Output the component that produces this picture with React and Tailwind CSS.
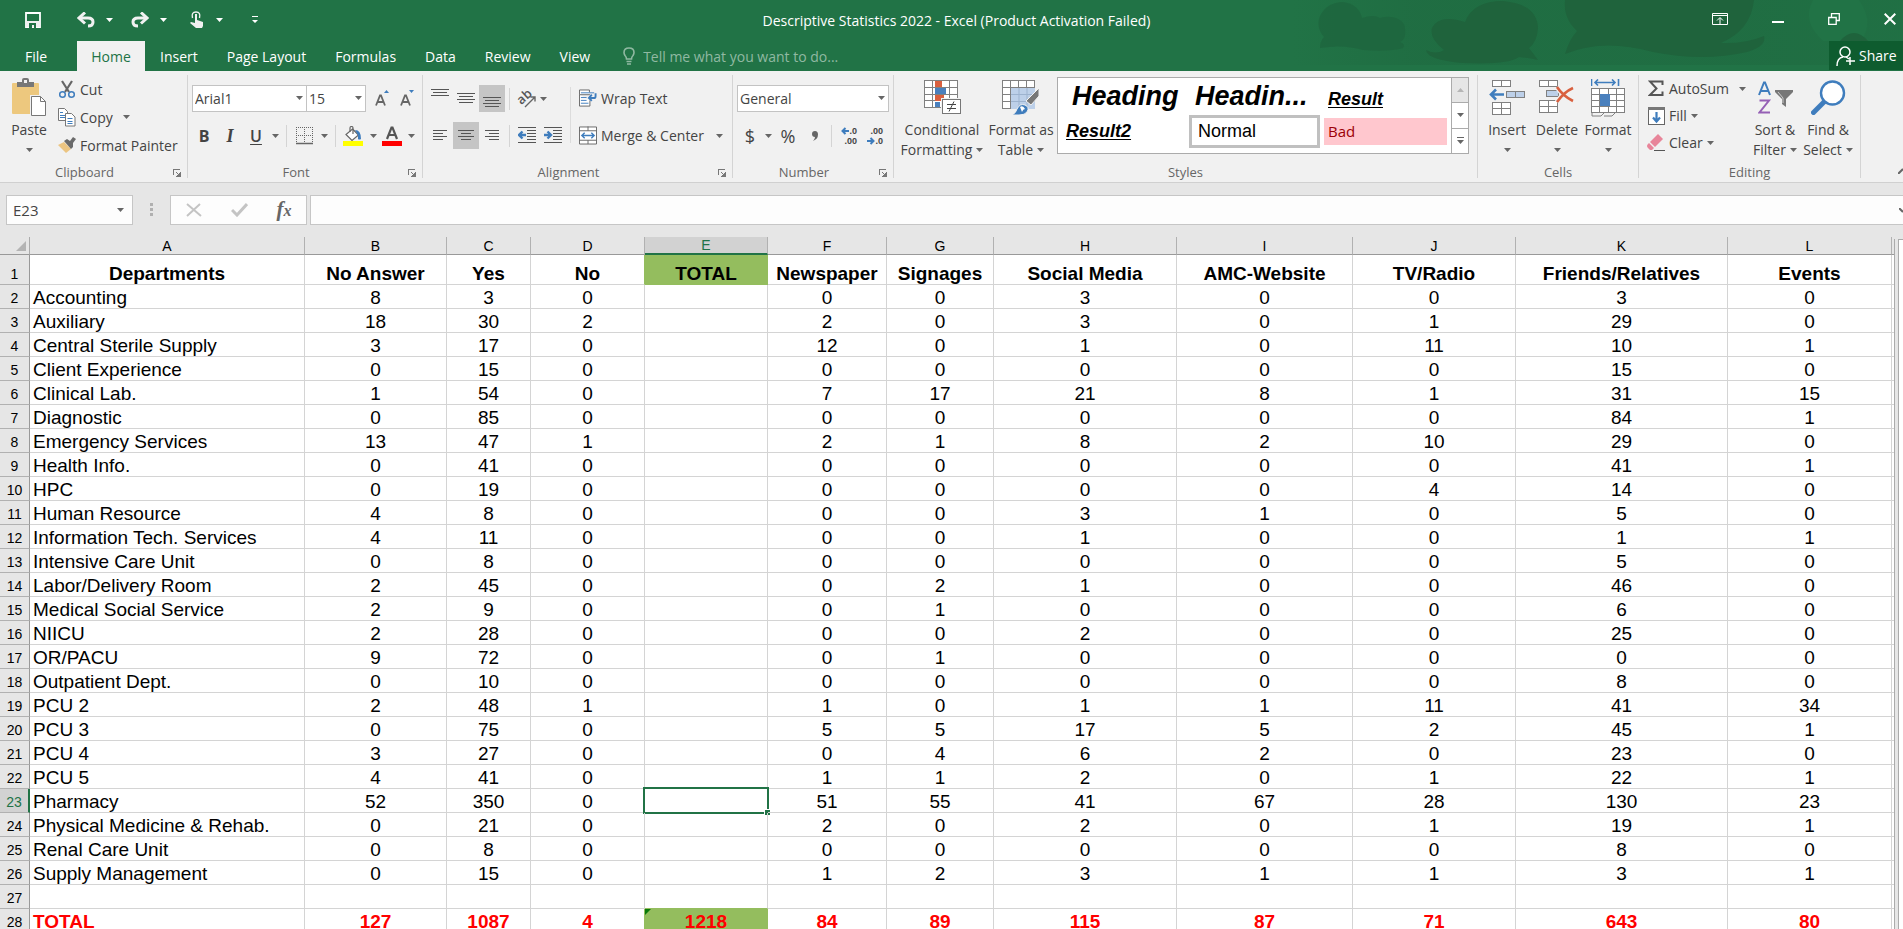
import React, { useState } from "react";

const columns = [
  { letter: "A", width: 275, title: "Departments" },
  { letter: "B", width: 142, title: "No Answer" },
  { letter: "C", width: 84, title: "Yes" },
  { letter: "D", width: 114, title: "No" },
  { letter: "E", width: 123, title: "TOTAL" },
  { letter: "F", width: 119, title: "Newspaper" },
  { letter: "G", width: 107, title: "Signages" },
  { letter: "H", width: 183, title: "Social Media" },
  { letter: "I", width: 176, title: "AMC-Website" },
  { letter: "J", width: 163, title: "TV/Radio" },
  { letter: "K", width: 212, title: "Friends/Relatives" },
  { letter: "L", width: 164, title: "Events" },
];

const rows = [
  ["Accounting", 8, 3, 0, "", 0, 0, 3, 0, 0, 3, 0],
  ["Auxiliary", 18, 30, 2, "", 2, 0, 3, 0, 1, 29, 0],
  ["Central Sterile Supply", 3, 17, 0, "", 12, 0, 1, 0, 11, 10, 1],
  ["Client Experience", 0, 15, 0, "", 0, 0, 0, 0, 0, 15, 0],
  ["Clinical Lab.", 1, 54, 0, "", 7, 17, 21, 8, 1, 31, 15],
  ["Diagnostic", 0, 85, 0, "", 0, 0, 0, 0, 0, 84, 1],
  ["Emergency Services", 13, 47, 1, "", 2, 1, 8, 2, 10, 29, 0],
  ["Health Info.", 0, 41, 0, "", 0, 0, 0, 0, 0, 41, 1],
  ["HPC", 0, 19, 0, "", 0, 0, 0, 0, 4, 14, 0],
  ["Human Resource", 4, 8, 0, "", 0, 0, 3, 1, 0, 5, 0],
  ["Information Tech. Services", 4, 11, 0, "", 0, 0, 1, 0, 0, 1, 1],
  ["Intensive Care Unit", 0, 8, 0, "", 0, 0, 0, 0, 0, 5, 0],
  ["Labor/Delivery Room", 2, 45, 0, "", 0, 2, 1, 0, 0, 46, 0],
  ["Medical Social Service", 2, 9, 0, "", 0, 1, 0, 0, 0, 6, 0],
  ["NIICU", 2, 28, 0, "", 0, 0, 2, 0, 0, 25, 0],
  ["OR/PACU", 9, 72, 0, "", 0, 1, 0, 0, 0, 0, 0],
  ["Outpatient Dept.", 0, 10, 0, "", 0, 0, 0, 0, 0, 8, 0],
  ["PCU 2", 2, 48, 1, "", 1, 0, 1, 1, 11, 41, 34],
  ["PCU 3", 0, 75, 0, "", 5, 5, 17, 5, 2, 45, 1],
  ["PCU 4", 3, 27, 0, "", 0, 4, 6, 2, 0, 23, 0],
  ["PCU 5", 4, 41, 0, "", 1, 1, 2, 0, 1, 22, 1],
  ["Pharmacy", 52, 350, 0, "", 51, 55, 41, 67, 28, 130, 23],
  ["Physical Medicine & Rehab.", 0, 21, 0, "", 2, 0, 2, 0, 1, 19, 1],
  ["Renal Care Unit", 0, 8, 0, "", 0, 0, 0, 0, 0, 8, 0],
  ["Supply Management", 0, 15, 0, "", 1, 2, 3, 1, 1, 3, 1],
  ["", "", "", "", "", "", "", "", "", "", "", ""],
  ["TOTAL", 127, 1087, 4, 1218, 84, 89, 115, 87, 71, 643, 80],
];

const tabs = ["Insert", "Page Layout", "Formulas", "Data", "Review", "View"];

const Caret = ({ className = "text-[#666]" }) => (
  <svg width="7" height="4" viewBox="0 0 7 4" className={`shrink-0 ${className}`}>
    <path d="M0 0h7L3.5 4z" fill="currentColor" />
  </svg>
);

const Lines = ({ rows, width = 18, height = 20 }) => (
  <svg width={width} height={height} shapeRendering="crispEdges">
    {rows.map(([x, y, w]) => (
      <rect key={y} x={x} y={y} width={w} height="1" fill="#555" />
    ))}
  </svg>
);

const Separator = () => <span className="mx-1 h-[22px] w-px bg-[#d4d4d4]" />;

const IconButton = ({ label, width = "w-[26px]", active, children }) => (
  <button
    type="button"
    aria-label={label}
    className={`flex h-[27px] shrink-0 items-center justify-center ${width} ${
      active ? "bg-[#c5c5c5]" : ""
    }`}
  >
    {children}
  </button>
);

const CaretButton = ({ label, width = "w-[14px]" }) => (
  <IconButton label={label} width={width}>
    <Caret />
  </IconButton>
);

const Group = ({ title, width, launcher, children }) => (
  <section
    aria-label={title}
    className={`my-1 flex h-[103px] flex-col border-r border-[#d4d4d4] ${width}`}
  >
    <div className="flex h-[91px]">{children}</div>
    <div
      className={`relative h-3 text-center text-[13px] leading-3 text-[#666] ${
        launcher ? "pr-[18px]" : ""
      }`}
    >
      {title}
      {launcher && (
        <button
          type="button"
          aria-label={`${title} settings`}
          className="absolute right-1.5 top-[3px]"
        >
          <svg width="8" height="8" shapeRendering="crispEdges">
            <path d="M.5 6V.5H7" fill="none" stroke="#777" />
            <path d="M7.500 3v5H3z" fill="#777" />
            <path d="M3 3l4 4" stroke="#777" />
          </svg>
        </button>
      )}
    </div>
  </section>
);

const BigButton = ({ icon, line1, line2, width }) => (
  <button
    type="button"
    className={`flex shrink-0 flex-col items-center whitespace-nowrap leading-5 ${width}`}
  >
    <span className="flex h-[45px] items-center justify-center">{icon}</span>
    <span>{line1}</span>
    <span className="flex h-5 items-center gap-1">
      {line2}
      <Caret />
    </span>
  </button>
);

const SmallButton = ({ icon, label, height = "h-7", caret }) => (
  <button
    type="button"
    className={`flex items-center whitespace-nowrap ${height}`}
  >
    <span className="mr-1 flex w-[18px] justify-center">{icon}</span>
    {label}
    {caret && (
      <span className={caret}>
        <Caret />
      </span>
    )}
  </button>
);

const DropDown = ({ label, value, width }) => (
  <div className={`relative ${width}`}>
    <select
      aria-label={label}
      defaultValue={value}
      className="h-[27px] w-full appearance-none border border-[#c3c3c3] bg-white pl-0.5 text-[#444]"
    >
      <option>{value}</option>
    </select>
    <span className="pointer-events-none absolute right-1 top-[11px] flex">
      <Caret />
    </span>
  </div>
);

const Grid = ({ x, y, w, h, cols, rows: count, fill = "#fff" }) => (
  <g stroke="#808080" fill="none">
    <rect x={x} y={y} width={w} height={h} fill={fill} />
    {Array.from({ length: cols - 1 }, (_, i) => {
      const px = x + Math.round((w / cols) * (i + 1));
      return <path key={`c${i}`} d={`M${px} ${y}v${h}`} />;
    })}
    {Array.from({ length: count - 1 }, (_, i) => {
      const py = y + Math.round((h / count) * (i + 1));
      return <path key={`r${i}`} d={`M${x} ${py}h${w}`} />;
    })}
  </g>
);

const PasteIcon = () => (
  <svg width="35" height="39" viewBox="0 0 35 39">
    <rect x="0" y="5" width="27" height="31" rx="1" fill="#edc87e" />
    <path d="M5 9V4h5V2q0-2 2-2h3q2 0 2 2v2h5v5z" fill="#777" />
    <rect x="12" y="2" width="3" height="3" fill="#f1f1f1" />
    <path d="M18 17h12l5 6v16H18z" fill="#f1f1f1" />
    <path d="M19.500 18.500h9l5 5v14h-14z" fill="#fff" stroke="#777" />
    <path d="M28.500 18.500v5h5" fill="none" stroke="#777" />
  </svg>
);

const CutIcon = () => (
  <svg width="16" height="19" viewBox="0 0 16 19" fill="none">
    <path d="M3 1l7 11M13 1L6 12" stroke="#666" strokeWidth="2.200" />
    <circle cx="3.500" cy="14.500" r="2.800" stroke="#3f7dbd" strokeWidth="1.500" />
    <circle cx="12.500" cy="14.500" r="2.800" stroke="#3f7dbd" strokeWidth="1.500" />
  </svg>
);

const CopyIcon = () => (
  <svg width="18" height="19" viewBox="0 0 18 19" fill="#fff" stroke="#777">
    <path d="M.5.5h6l3 3v9h-9z" />
    <path d="M2 4.500h3M2 7.500h5M2 9.500h5" stroke="#3f7dbd" />
    <path d="M7.500 5.500h6l3.500 3.500v9h-9.500z" />
    <path d="M9.500 10.500h5M9.500 13.500h5M9.500 15.500h5" stroke="#3f7dbd" />
  </svg>
);

const PainterIcon = () => (
  <svg width="18" height="17" viewBox="0 0 18 17">
    <path d="M0 8l6-3 7 7-5 4z" fill="#ecc582" />
    <path d="M6 4l3-2 3 2 3-4 3 2-3 4v4l-2 2z" fill="#6a6a6a" />
  </svg>
);

const FontStep = ({ up }) => (
  <svg width="14" height="17" viewBox="0 0 14 17">
    <path d="M1 15.500L5 5.500h1L10 15.500M2.500 12h6" fill="none" stroke="#666" strokeWidth="1.800" />
    <path d={up ? "M9 3h5l-2.500-3z" : "M9 0h5l-2.500 3z"} fill="#3f7dbd" />
  </svg>
);

const BordersIcon = () => (
  <svg width="17" height="18" viewBox="0 0 17 18" fill="none" stroke="#666">
    <path d="M.5 0v17M16.500 0v17M0 .5h17M8.500 0v17M0 8.500h17" strokeDasharray="1 1" />
    <path d="M0 16.500h17" strokeWidth="1.500" />
  </svg>
);

const BucketIcon = () => (
  <svg width="20" height="20" viewBox="0 0 20 20">
    <path d="M9.500 3l6 6-6.500 5.500L3 8.500z" fill="#fff" stroke="#666" strokeWidth="1.200" />
    <path d="M7 6V2q0-1.500 1.500-1.500T10 2v6" fill="none" stroke="#666" strokeWidth="1.200" />
    <path d="M12 4q6 0 6 9-2 1-3 0V9z" fill="#3f7dbd" />
    <rect y="15" width="20" height="5" fill="#ff0" />
  </svg>
);

const FontColorIcon = () => (
  <svg width="20" height="20" viewBox="0 0 20 20">
    <path d="M5 13L9.500 1.500h1L15 13M7 9h6.500" fill="none" stroke="#555" strokeWidth="2.200" />
    <rect y="15" width="20" height="5" fill="red" />
  </svg>
);

const OrientationIcon = () => (
  <svg width="20" height="20" viewBox="0 0 20 20" className="overflow-visible">
    <text
      x="2"
      y="14"
      fontSize="13"
      fill="#555"
      transform="rotate(-42 6 12)"
      className="font-['Open_Sans',sans-serif] font-semibold"
    >
      ab
    </text>
    <path d="M8 18L18 8M13.500 8H18v4.500" fill="none" stroke="#666" strokeWidth="1.400" />
  </svg>
);

const IndentIcon = ({ right }) => (
  <svg width="18" height="17" viewBox="0 0 18 17">
    <path d="M0 .5h18M9 3.500h9M9 6.500h9M9 9.500h9M9 12.500h9M0 15.500h18" stroke="#555" />
    <path
      d={right ? "M0 8h6M3.500 4.500L7 8l-3.500 3.500" : "M8 8H2M4.500 4.500L1 8l3.500 3.500"}
      fill="none"
      stroke="#3f7dbd"
      strokeWidth="2.400"
    />
  </svg>
);

const WrapIcon = () => (
  <svg width="19" height="19" viewBox="0 0 19 19" fill="none" stroke="#666">
    <path d="M11 .5H.5v5h11M11 .5V3M.5 5.500v12h11v-6" fill="#fff" />
    <path d="M2 3.500h14M2 8.500h6M2 11.500h6M2 14.500h8" stroke="#3f7dbd" />
    <path d="M17.500 4v3q0 2-2 2H11M13.500 5.500L10.500 9l3 3" stroke="#3f7dbd" strokeWidth="2" />
  </svg>
);

const MergeIcon = () => (
  <svg width="19" height="19" viewBox="0 0 19 19" fill="none" stroke="#666">
    <path d="M.5.500h18v18H.500zM.5 4.500h18M.5 14.500h18M9.500 0v4.500M9.500 14.500v4" fill="#fff" />
    <path d="M3 9.500h13M6 6.500l-3 3 3 3M13 6.500l3 3-3 3" stroke="#3f7dbd" strokeWidth="1.500" />
  </svg>
);

const DecimalIcon = ({ less }) => (
  <svg width="17" height="22" viewBox="0 0 17 22">
    <g fontSize="9" fill="#444" className="font-['Liberation_Sans',sans-serif] font-bold">
      <text x="16" y="9" textAnchor="end">{less ? ".00" : ".0"}</text>
      <text x="16" y="19" textAnchor="end">{less ? ".0" : ".00"}</text>
    </g>
    <path
      d={less ? "M0 16h6M3.500 13l3 3-3 3" : "M8 6H2M4.500 3l-3 3 3 3"}
      fill="none"
      stroke="#3f7dbd"
      strokeWidth="2"
    />
  </svg>
);

const ConditionalIcon = () => (
  <svg width="37" height="35" viewBox="0 0 37 35">
    <Grid x={0.5} y={0.5} w={33} h={27} cols={4} rows={4} />
    <rect x="11" y="1" width="7" height="6" fill="#d9603f" />
    <rect x="11" y="8" width="11" height="6" fill="#4a80bd" />
    <rect x="11" y="15" width="9" height="6" fill="#d9603f" />
    <rect x="11" y="22" width="5" height="5" fill="#4a80bd" />
    <rect x="17" y="18" width="20" height="17" fill="#f1f1f1" />
    <rect x="18.500" y="19.500" width="18" height="14" fill="#fff" stroke="#777" />
    <path d="M23 24.500h9M23 28.500h9M30 21.500l-5 10" stroke="#444" />
  </svg>
);

const FormatTableIcon = () => (
  <svg width="38" height="36" viewBox="0 0 38 36">
    <Grid x={0.5} y={0.5} w={32} h={28} cols={4} rows={4} />
    <rect x="9" y="8" width="24" height="21" fill="#bdd0e9" />
    <path d="M17 8v21M25 8v21M9 14.500h24M9 21.500h24" stroke="#9db3cf" />
    <path d="M37 8v8l-8 9-5-4z" fill="#777" stroke="#f1f1f1" />
    <path d="M10 35q4-2 5-6 3-6 8-4t2 7q-2 3-8 3z" fill="#3f7dbd" stroke="#f1f1f1" />
    <path d="M18 27q3-2 5 2-2 0-3 3z" fill="#fff" />
  </svg>
);

const InsertIcon = () => (
  <svg width="37" height="36" viewBox="0 0 37 36">
    <Grid x={3.5} y={0.5} w={18} h={6} cols={2} rows={1} />
    <Grid x={17.5} y={11.5} w={18} h={6} cols={2} rows={1} fill="#bdd0e9" />
    <Grid x={3.5} y={22.5} w={18} h={12} cols={2} rows={2} />
    <path d="M15 14.500H2M7 9.500l-5 5 5 5" fill="none" stroke="#3f7dbd" strokeWidth="2.600" />
  </svg>
);

const DeleteIcon = () => (
  <svg width="36" height="36" viewBox="0 0 36 36">
    <Grid x={0.5} y={0.5} w={18} h={6} cols={2} rows={1} />
    <Grid x={7.5} y={10.5} w={12} h={6} cols={1} rows={1} fill="#bdd0e9" />
    <Grid x={0.5} y={20.5} w={18} h={12} cols={2} rows={2} />
    <path d="M18 7q6 9 16 14M34 8q-9 4-16 14" fill="none" stroke="#f1f1f1" strokeWidth="5" />
    <path d="M18 7q6 9 16 14M34 8q-9 4-16 14" fill="none" stroke="#d9603f" strokeWidth="2.600" />
  </svg>
);

const FormatIcon = () => (
  <svg width="35" height="38" viewBox="0 0 35 38">
    <Grid x={0.5} y={9.5} w={33} h={24} cols={4} rows={4} />
    <rect x="9" y="15" width="10" height="12" fill="#4a80bd" />
    <path d="M1 34v3h9l3-3M13 37h8l3-3" fill="none" stroke="#808080" />
    <path
      d="M.5 0v7M27.500 0v7M4 3.500h20M7 .5l-3 3 3 3M21 .5l3 3-3 3"
      fill="none"
      stroke="#3f7dbd"
      strokeWidth="1.600"
    />
  </svg>
);

const SigmaIcon = () => (
  <svg width="16" height="17" viewBox="0 0 16 17" fill="none" stroke="#555" strokeWidth="2">
    <path d="M14.500 5V1.500H2L8.500 8.500 2 15h12.500v-3.500" />
  </svg>
);

const FillIcon = () => (
  <svg width="17" height="18" viewBox="0 0 17 18">
    <rect x=".5" y=".5" width="16" height="17" fill="#fff" stroke="#666" />
    <rect width="17" height="3" fill="#777" />
    <path d="M8.500 5v9M5 10.500l3.500 4 3.500-4" fill="none" stroke="#3f7dbd" strokeWidth="2.200" />
  </svg>
);

const EraserIcon = () => (
  <svg width="18" height="17" viewBox="0 0 18 17">
    <path d="M3 8l8-8 5 5-8 8z" fill="#e8859a" />
    <path d="M2 9l5 5-2 2H3l-2-2q-2-2 0-4z" fill="#e8859a" />
    <path d="M7 16.500h11" stroke="#555" />
  </svg>
);

const SortIcon = () => (
  <svg width="35" height="34" viewBox="0 0 35 34">
    <path d="M1 14L6 1.500h1L12 14M3 10h7.500" fill="none" stroke="#3f7dbd" strokeWidth="2" />
    <path d="M1.500 19.500H11L1.500 31.500H12" fill="none" stroke="#9560b5" strokeWidth="2" />
    <path d="M17 9h18v2l-7 7v8l-4-3v-5l-7-7z" fill="#777" />
    <path d="M20 11l5 6v5" fill="none" stroke="#ccc" />
  </svg>
);

const FindIcon = () => (
  <svg width="35" height="35" viewBox="0 0 35 35">
    <path d="M2.500 32.500L13 22" stroke="#3f7dbd" strokeWidth="5" strokeLinecap="round" />
    <circle cx="21.500" cy="13" r="11.500" fill="#fff" stroke="#3f7dbd" strokeWidth="2.400" />
  </svg>
);

const HeaderArt = () => (
  <svg
    aria-hidden="true"
    width="610"
    height="71"
    viewBox="0 0 610 71"
    className="absolute right-0 top-0"
  >
    <defs>
      <linearGradient id="fade">
        <stop offset="0" stopColor="#1f6b41" stopOpacity="0" />
        <stop offset=".2" stopColor="#1f6b41" stopOpacity=".7" />
        <stop offset=".75" stopColor="#1f6b41" stopOpacity=".7" />
        <stop offset="1" stopColor="#1f6b41" stopOpacity=".4" />
      </linearGradient>
    </defs>
    <rect width="610" height="65" fill="url(#fade)" />
    <path
      d="M27 48q0-7 4-11C18 22 30 2 50 2q16 2 19 16 12-4 18 0 16-4 24 6 4 14-4 18 6 2 3 6-14 4-40 2-20-6-43-2z"
      fill="#1e643d"
      opacity=".7"
    />
    <path
      d="M133 50q10 5 18 0Q136 38 139 28 146 14 172 22 180 1 210 1 244 4 245 28 244 42 236 48L245 60Q236 58 226 57 215 65 170 63 134 60 133 50z"
      fill="#1f633c"
    />
    <path
      d="M272 0H461Q458 30 428 43 452 44 471 36 474 46 454 52 410 62 360 52 310 38 272 54 276 40 284 31 270 18 272 0z"
      fill="#1f633c"
    />
    <path d="M520 0h46q16 22 2 41h-38q-22-20-10-41z" fill="#217346" />
    <path d="M547 41q14-16 28 0z" fill="#1f633c" />
  </svg>
);

const TitleBar = () => (
  <div className="relative flex h-[41px] items-center text-[14px] text-white">
    <div className="flex flex-1 items-center pl-[25px] pb-0.5">
      <button type="button" aria-label="Save" className="mr-9">
        <svg width="16" height="16" viewBox="0 0 16 16">
          <path d="M1 1h14v14H1z" fill="none" stroke="#fff" strokeWidth="1.800" />
          <path d="M1 9h14v6H1z" fill="#f1f1f1" />
          <path d="M4 11h7v5H9v-3H7v3H4z" fill="#217346" />
        </svg>
      </button>
      <button type="button" aria-label="Undo" className="mr-[11px]">
        <svg width="18" height="16" viewBox="0 0 18 16" fill="none" stroke="#f1f1f1" strokeWidth="3">
          <path d="M2 6h9q5 0 5 4t-5 4" />
          <path d="M8 .5L2 6l6 5.500" />
        </svg>
      </button>
      <Caret className="mr-[18px] text-white" />
      <button type="button" aria-label="Redo" className="mr-[11px]">
        <svg width="18" height="16" viewBox="0 0 18 16" fill="none" stroke="#f1f1f1" strokeWidth="3">
          <path d="M16 6H7q-5 0-5 4t5 4" />
          <path d="M10 .5L16 6l-6 5.500" />
        </svg>
      </button>
      <Caret className="mr-[23px] text-white" />
      <button type="button" aria-label="Touch/Mouse Mode" className="mr-[13px]">
        <svg width="13" height="17" viewBox="0 0 13 17">
          <path d="M2.500 7Q1 1 6 1t3.500 6" fill="none" stroke="#f1f1f1" strokeWidth="1.400" />
          <path d="M5 3h2v6l6 2v4l-1 2H6L0 12l1-1 4 1z" fill="#f1f1f1" />
        </svg>
      </button>
      <Caret className="mr-[29px] text-white" />
      <button type="button" aria-label="Customize Quick Access Toolbar">
        <svg width="6" height="8" fill="#fff">
          <path d="M0 0h6v1H0zM0 4h6L3 7z" />
        </svg>
      </button>
    </div>
    <h1 className="whitespace-nowrap pr-2">
      Descriptive Statistics 2022 - Excel (Product Activation Failed)
    </h1>
    <div className="flex flex-1 items-center justify-end gap-11 pr-[7px] pb-1">
      <button type="button" aria-label="Ribbon Display Options">
        <svg width="16" height="12" viewBox="0 0 16 12" fill="none" stroke="#fff">
          <path d="M.5.500h15v11H.500zM.5 2.500h15M8 11V5M5 7.500L8 4.500l3 3" />
        </svg>
      </button>
      <button type="button" aria-label="Minimize" className="pt-1.5">
        <svg width="12" height="2">
          <rect width="12" height="2" fill="#fff" />
        </svg>
      </button>
      <button type="button" aria-label="Restore Down">
        <svg width="12" height="12" viewBox="0 0 12 12" fill="none" stroke="#fff" strokeWidth="1.300">
          <path d="M.7 4.500h7.500v6.800H.7zM3.500 4V.7h7.800v6.800H8.500" />
        </svg>
      </button>
      <button type="button" aria-label="Close">
        <svg width="12" height="12" viewBox="0 0 12 12" stroke="#fff" strokeWidth="2">
          <path d="M.7.7l10.600 10.600M11.300.7L.7 11.300" />
        </svg>
      </button>
    </div>
  </div>
);

const TabBar = () => (
  <nav className="relative flex h-[30px] items-center text-[14px] text-white">
    <button type="button" className="w-[77px] pl-[25px] text-left">
      File
    </button>
    <button type="button" className="mr-[15px] h-[30px] w-[68px] bg-[#f1f1f1] text-[#217346]">
      Home
    </button>
    <div className="flex gap-[29px]">
      {tabs.map((tab) => (
        <button key={tab} type="button" className="whitespace-nowrap">
          {tab}
        </button>
      ))}
    </div>
    <label className="ml-[33px] flex flex-1 items-center gap-2">
      <svg width="12" height="18" viewBox="0 0 12 18" fill="none" stroke="#90b9a2" strokeWidth="1.600">
        <path d="M3.500 12q0-2-1.500-3.500Q1 7 1 5.500 1 1 6 1t5 4.500Q11 7 10 8.500 8.500 10 8.500 12z" />
        <path d="M3.500 14.500h5M4 17h4" />
      </svg>
      <input
        type="text"
        aria-label="Tell me what you want to do"
        placeholder="Tell me what you want to do..."
        className="w-60 bg-transparent placeholder:text-[#90b9a2]"
      />
    </label>
    <button type="button" className="flex h-[29px] w-[74px] items-center gap-1 self-start bg-[#0e5c2f] pl-[7px]">
      <svg width="19" height="20" viewBox="0 0 19 20" fill="none" stroke="#fff" strokeWidth="1.500">
        <circle cx="9" cy="6" r="5" />
        <path d="M1 20q0-8 6-9M10 11l3 2M14 11v8M10 15h9" />
      </svg>
      Share
    </button>
  </nav>
);

const Ribbon = () => (
  <div className="flex h-28 border-b border-[#d0d0d0] bg-[#f1f1f1] text-[14px] text-[#444]">
    <Group title="Clipboard" width="w-[188px]" launcher>
      <BigButton icon={<PasteIcon />} line1="Paste" width="w-[58px]" />
      <div className="flex flex-col">
        <SmallButton icon={<CutIcon />} label="Cut" />
        <SmallButton icon={<CopyIcon />} label="Copy" caret="ml-2.5" />
        <SmallButton icon={<PainterIcon />} label="Format Painter" />
      </div>
    </Group>

    <Group title="Font" width="w-[235px]" launcher>
      <div className="flex flex-col gap-2.5 pl-1 pt-2.5">
        <div className="flex items-center">
          <DropDown label="Font" value="Arial1" width="w-[115px]" />
          <DropDown label="Font size" value="15" width="-ml-px w-[60px]" />
          <span className="w-1" />
          <IconButton label="Increase Font Size" width="w-6">
            <FontStep up />
          </IconButton>
          <IconButton label="Decrease Font Size">
            <FontStep />
          </IconButton>
        </div>
        <div className="flex items-center">
          <IconButton label="Bold" width="w-6">
            <span className="text-base font-bold">B</span>
          </IconButton>
          <IconButton label="Italic" width="w-7">
            <span className="font-['Liberation_Serif',serif] text-lg font-bold italic">I</span>
          </IconButton>
          <IconButton label="Underline" width="w-6">
            <span className="text-base font-semibold underline underline-offset-2">U</span>
          </IconButton>
          <CaretButton label="Underline options" />
          <Separator />
          <IconButton label="Borders" width="w-[26px]">
            <BordersIcon />
          </IconButton>
          <CaretButton label="Border options" />
          <Separator />
          <IconButton label="Fill Color">
            <BucketIcon />
          </IconButton>
          <CaretButton label="Fill color options" />
          <IconButton label="Font Color" width="w-6">
            <FontColorIcon />
          </IconButton>
          <CaretButton label="Font color options" />
        </div>
      </div>
    </Group>

    <Group title="Alignment" width="w-[310px]" launcher>
      <div className="flex flex-col gap-2.5 pl-1 pt-2.5">
        <div className="flex items-center">
          <IconButton label="Top Align">
            <Lines rows={[[0, 0, 18], [2, 3, 14], [0, 6, 18]]} />
          </IconButton>
          <IconButton label="Middle Align">
            <Lines rows={[[0, 4, 18], [2, 7, 14], [0, 10, 18], [2, 13, 14]]} />
          </IconButton>
          <IconButton label="Bottom Align" active>
            <Lines rows={[[0, 8, 18], [2, 11, 14], [0, 14, 18], [2, 17, 14]]} />
          </IconButton>
          <Separator />
          <IconButton label="Orientation" width="w-[25px]">
            <OrientationIcon />
          </IconButton>
          <CaretButton label="Orientation options" width="w-2" />
        </div>
        <div className="flex items-center">
          <IconButton label="Align Left">
            <Lines width={14} rows={[[0, 4, 14], [0, 7, 10], [0, 10, 14], [0, 13, 10]]} />
          </IconButton>
          <IconButton label="Center" active>
            <Lines width={16} rows={[[0, 4, 16], [3, 7, 10], [0, 10, 16], [3, 13, 10]]} />
          </IconButton>
          <IconButton label="Align Right">
            <Lines width={14} rows={[[0, 4, 14], [4, 7, 10], [0, 10, 14], [4, 13, 10]]} />
          </IconButton>
          <Separator />
          <IconButton label="Decrease Indent">
            <IndentIcon />
          </IconButton>
          <IconButton label="Increase Indent">
            <IndentIcon right />
          </IconButton>
        </div>
      </div>
      <span className="ml-1 mt-3 h-14 w-px bg-[#dcdcdc]" />
      <div className="flex flex-col gap-2.5 pl-2 pt-2.5">
        <SmallButton icon={<WrapIcon />} label="Wrap Text" height="h-[27px]" />
        <SmallButton icon={<MergeIcon />} label="Merge & Center" height="h-[27px]" caret="ml-3" />
      </div>
    </Group>

    <Group title="Number" width="w-[161px]" launcher>
      <div className="flex flex-col gap-2.5 pl-1 pt-2.5">
        <DropDown label="Number Format" value="General" width="w-[152px]" />
        <div className="flex items-center">
          <IconButton label="Accounting Number Format">
            <span className="text-lg">$</span>
          </IconButton>
          <CaretButton label="Accounting options" width="w-2.5" />
          <IconButton label="Percent Style" width="w-[30px]">
            <span className="text-lg">%</span>
          </IconButton>
          <IconButton label="Comma Style" width="w-6">
            <svg width="6" height="10" viewBox="0 0 6 10">
              <path d="M3 0q3 0 3 3.500Q6 8 1 10q2-2 2-4-3 0-3-3 0-3 3-3z" fill="#666" />
            </svg>
          </IconButton>
          <Separator />
          <IconButton label="Increase Decimal">
            <DecimalIcon />
          </IconButton>
          <IconButton label="Decrease Decimal">
            <DecimalIcon less />
          </IconButton>
        </div>
      </div>
    </Group>

    <Group title="Styles" width="min-w-[584px] flex-1">
      <div className="flex gap-1 pl-1.5">
        <BigButton icon={<ConditionalIcon />} line1="Conditional" line2="Formatting" width="w-[84px]" />
        <BigButton icon={<FormatTableIcon />} line1="Format as" line2="Table" width="w-[66px]" />
      </div>
      <div className="ml-[3px] mr-2 mt-0.5 flex h-[77px] flex-1 border border-[#ababab] bg-white font-['Liberation_Sans',Arial,sans-serif] text-black">
        <div className="grid flex-1 grid-cols-3 grid-rows-2 items-center pb-1">
          <button type="button" className="pl-3.5 text-left text-[27px] font-bold italic leading-8">
            Heading
          </button>
          <button type="button" className="pl-1.5 text-left text-[27px] font-bold italic leading-8">
            Headin...
          </button>
          <button type="button" className="pl-2 pt-1.5 text-left text-lg font-bold italic leading-6 underline underline-offset-2">
            Result
          </button>
          <button type="button" className="pl-2 text-left text-lg font-bold italic leading-6 underline underline-offset-2">
            Result2
          </button>
          <button type="button" className="h-[33px] border-3 border-[#c0c0c0] pl-1.5 text-left text-lg leading-6">
            Normal
          </button>
          <button
            type="button"
            className="ml-1 mr-1 h-[27px] bg-[#ffc7ce] pl-1 text-left font-['Open_Sans',sans-serif] text-[15px] text-[#9c0006]"
          >
            Bad
          </button>
        </div>
        <div className="flex w-[17px] flex-col divide-y divide-[#ababab] border-l border-[#ababab]">
          <button type="button" aria-label="Scroll up" className="flex flex-1 items-center justify-center bg-[#e6e6e6]">
            <Caret className="rotate-180 text-[#b5b5b5]" />
          </button>
          <button type="button" aria-label="Scroll down" className="flex flex-1 items-center justify-center">
            <Caret />
          </button>
          <button type="button" aria-label="More styles" className="flex flex-1 flex-col items-center justify-center gap-0.5">
            <span className="h-px w-[7px] bg-[#666]" />
            <Caret />
          </button>
        </div>
      </div>
    </Group>

    <Group title="Cells" width="w-[161px]">
      <div className="flex pl-1">
        <BigButton icon={<InsertIcon />} line1="Insert" width="w-[50px]" />
        <BigButton icon={<DeleteIcon />} line1="Delete" width="w-[50px]" />
        <BigButton icon={<FormatIcon />} line1="Format" width="w-[52px]" />
      </div>
    </Group>

    <Group title="Editing" width="w-[222px]">
      <div className="flex w-[108px] flex-col pl-2">
        <SmallButton icon={<SigmaIcon />} label="AutoSum" height="h-[27px]" caret="ml-2.5" />
        <SmallButton icon={<FillIcon />} label="Fill" height="h-[27px]" caret="ml-1" />
        <SmallButton icon={<EraserIcon />} label="Clear" height="h-[27px]" caret="ml-1" />
      </div>
      <BigButton icon={<SortIcon />} line1="Sort &amp;" line2="Filter" width="w-[56px]" />
      <BigButton icon={<FindIcon />} line1="Find &amp;" line2="Select" width="w-[50px]" />
    </Group>

    <div className="flex w-[42px] items-end justify-end pb-2">
      <button type="button" aria-label="Collapse the Ribbon">
        <svg width="5" height="6">
          <path d="M0 6l5-5" stroke="#666" strokeWidth="2" />
        </svg>
      </button>
    </div>
  </div>
);

const FormulaBar = () => {
  const [cellName, setCellName] = useState("E23");
  const [formula, setFormula] = useState("");

  return (
    <div className="flex h-[54px] shrink-0 pb-3 pt-3 text-[15px] text-[#444]">
      <div className="relative ml-1.5 w-[127px]">
        <input
          aria-label="Name Box"
          value={cellName}
          onChange={(e) => setCellName(e.target.value)}
          className="h-[30px] w-full border border-[#c6c6c6] bg-[#fdfdfd] pl-1.5"
        />
        <span className="pointer-events-none absolute right-[9px] top-[13px] flex">
          <Caret />
        </span>
      </div>
      <div className="flex w-[37px] flex-col items-center justify-center gap-0.5 pb-0.5">
        <span className="h-[3px] w-[3px] bg-[#b0b0b0]" />
        <span className="h-[3px] w-[3px] bg-[#b0b0b0]" />
        <span className="h-[3px] w-[3px] bg-[#b0b0b0]" />
      </div>
      <div className="flex h-[30px] w-[137px] items-center justify-around border border-[#c6c6c6] bg-[#fdfdfd]">
        <button type="button" aria-label="Cancel">
          <svg width="16" height="14" fill="none" stroke="#c4c4c4" strokeWidth="2">
            <path d="M1 1l14 12M14 1L1 13" />
          </svg>
        </button>
        <button type="button" aria-label="Enter">
          <svg width="17" height="14" fill="none" stroke="#c4c4c4" strokeWidth="3">
            <path d="M1 7l5 5L16 1" />
          </svg>
        </button>
        <button
          type="button"
          aria-label="Insert Function"
          className="font-['Liberation_Serif',serif] text-[21px] font-bold italic leading-6 text-[#666]"
        >
          f<span className="text-base">x</span>
        </button>
      </div>
      <div className="ml-[3px] flex h-[30px] flex-1 items-center border-y border-l border-[#c6c6c6] bg-[#fdfdfd]">
        <input
          aria-label="Formula Bar"
          value={formula}
          onChange={(e) => setFormula(e.target.value)}
          className="h-full min-w-0 flex-1 px-2"
        />
        <button type="button" aria-label="Expand Formula Bar">
          <svg width="4" height="5">
            <path d="M0 0l4 4" stroke="#666" strokeWidth="2" />
          </svg>
        </button>
      </div>
    </div>
  );
};

const cellClass = (rowNumber, letter) => {
  const classes = [];
  const isTotal = rowNumber === 28;
  const greenRow = rowNumber === 1 || isTotal;

  classes.push(letter === "A" && rowNumber !== 1 ? "pl-[3px] text-left" : "text-center");
  if (greenRow) classes.push("font-bold");
  if (isTotal) classes.push("text-[#ff0000]");

  // the green fill hides the grid lines around it
  if (letter === "E" && greenRow) {
    classes.push("bg-[#94bd5e] border-[#94bd5e]");
  } else if (letter === "D" && greenRow) {
    classes.push("border-b-[#d4d4d4] border-r-[#94bd5e]");
  } else if (letter === "E" && rowNumber === 27) {
    classes.push("border-r-[#d4d4d4] border-b-[#94bd5e]");
  } else {
    classes.push("border-[#d4d4d4]");
  }
  return classes.join(" ");
};

const Sheet = () => {
  const allRows = [columns.map((column) => column.title), ...rows];

  return (
    <div className="flex min-h-0 flex-1">
      <div className="flex-1 overflow-hidden bg-white">
        <table className="w-full table-fixed border-separate border-spacing-0 font-['Liberation_Sans',Arial,sans-serif] text-black">
          <colgroup>
            <col className="w-[30px]" />
            {columns.map((column) => (
              <col key={column.letter} style={{ width: column.width }} />
            ))}
            <col />
          </colgroup>
          <thead>
            <tr className="h-[18px] bg-[#e6e6e6] text-[14px] leading-4">
              <th className="border-b border-r border-b-[#999] border-r-[#ababab] p-0">
                <svg width="10" height="10" className="ml-auto mr-[3px]">
                  <path d="M10 0v10H0z" fill="#b4b4b4" />
                </svg>
              </th>
              {columns.map(({ letter }) => (
                <th
                  key={letter}
                  scope="col"
                  className={`border-r border-r-[#b1b1b1] p-0 font-normal ${
                    letter === "E"
                      ? "border-b-2 border-b-[#217346] bg-[#d2d2d2] text-[#217346]"
                      : "border-b border-b-[#999]"
                  }`}
                >
                  {letter}
                </th>
              ))}
              <th className="border-b border-b-[#999] p-0" />
            </tr>
          </thead>
          <tbody>
            {allRows.map((values, index) => {
              const rowNumber = index + 1;
              return (
                <tr
                  key={rowNumber}
                  className={`align-bottom text-[19px] leading-[21px] ${
                    rowNumber === 1 ? "h-[30px]" : "h-6"
                  }`}
                >
                  <th
                    scope="row"
                    className={`border-b border-b-[#b1b1b1] p-0 text-[14px] font-normal leading-5 ${
                      rowNumber === 23
                        ? "border-r-2 border-r-[#217346] bg-[#d2d2d2] text-[#217346]"
                        : "border-r border-r-[#999] bg-[#e6e6e6]"
                    }`}
                  >
                    {rowNumber}
                  </th>
                  {columns.map(({ letter }, i) => (
                    <td
                      key={letter}
                      className={`relative whitespace-nowrap border-b border-r p-0 ${cellClass(
                        rowNumber,
                        letter
                      )}`}
                    >
                      {values[i]}
                      {letter === "E" && rowNumber === 23 && (
                        <span className="absolute -bottom-0.5 -left-0.5 -right-0.5 -top-0.5 border-2 border-[#217346]">
                          <span className="absolute -bottom-[3px] -right-[3px] h-1.5 w-1.5 border-l border-t border-white bg-[#217346]" />
                        </span>
                      )}
                      {letter === "E" && rowNumber === 28 && (
                        <svg width="6" height="6" className="absolute left-0 top-0">
                          <path d="M0 0h6L0 6z" fill="#0a7a0a" />
                        </svg>
                      )}
                    </td>
                  ))}
                  <td className="border-b border-[#d4d4d4] p-0" />
                </tr>
              );
            })}
          </tbody>
        </table>
      </div>
      <div className="flex w-[9px] bg-[#e6e6e6]">
        <div className="mt-0.5 w-[5px] border-x border-[#ababab]" />
        <div className="mt-0.5 flex-1 border-t border-[#ababab] bg-white" />
      </div>
    </div>
  );
};

const App = () => (
  <div className="flex h-screen flex-col overflow-hidden bg-[#e6e6e6] font-['Open_Sans','Noto_Sans',sans-serif]">
    <header className="relative shrink-0 bg-[#217346]">
      <HeaderArt />
      <TitleBar />
      <TabBar />
    </header>
    <Ribbon />
    <FormulaBar />
    <Sheet />
  </div>
);

export default App;
